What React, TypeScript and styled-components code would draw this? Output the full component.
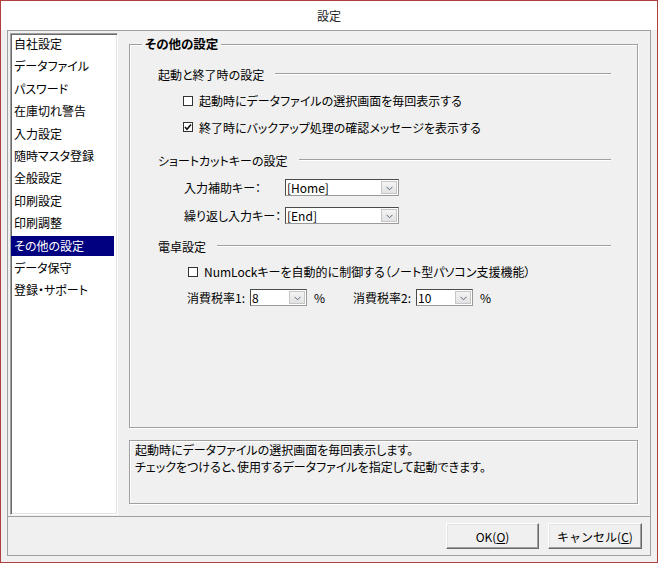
import React from "react";
import styled, { createGlobalStyle } from "styled-components";

const Global = createGlobalStyle`
  html, body { margin: 0; padding: 0; background: #ffffff; }
  body {
    font-family: "Noto Sans CJK JP", "Noto Sans", sans-serif;
    font-size: 12px;
    color: #000;
    font-feature-settings: "palt";
  }
  * { box-sizing: border-box; }
`;

const Window = styled.div`
  width: 658px;
  height: 563px;
  border: 1px solid #b0403e;
  background: #f0f0f0;
  display: flex;
  flex-direction: column;
`;

const TitleBar = styled.div`
  height: 29px;
  background: #ffffff;
  display: flex;
  align-items: center;
  justify-content: center;
  font-size: 12px;
  color: #222;
`;

const Body = styled.div`
  flex: 1;
  padding: 0 6px 6px 6px;
  display: flex;
`;

const Frame = styled.div`
  flex: 1;
  border: 1px solid #a0a0a0;
  display: flex;
  flex-direction: column;
`;

const TopArea = styled.div`
  height: 486px;
  display: flex;
  border-bottom: 1px solid #a0a0a0;
`;

const ListWrap = styled.div`
  padding: 2px 0 1px 2px;
  display: flex;
`;

const ListBox = styled.ul`
  width: 108px;
  margin: 0;
  padding: 0;
  list-style: none;
  background: #ffffff;
  border: 1px solid;
  border-color: #a0a0a0 #ffffff #ffffff #a0a0a0;
  box-shadow: inset 1px 1px 0 #696969, inset -1px -1px 0 #e3e3e3;
`;

const ListItem = styled.li<{ $selected?: boolean }>`
  height: 20px;
  line-height: 20px;
  width: calc(100% - 3px);
  margin-bottom: 2.4px;
  padding-left: 3px;
  white-space: nowrap;
  background: ${(p) => (p.$selected ? "#000080" : "transparent")};
  color: ${(p) => (p.$selected ? "#ffffff" : "#000")};
`;

const Content = styled.div`
  flex: 1;
  padding: 13px 12px 12px 11px;
  display: flex;
  flex-direction: column;
`;

const GroupBox = styled.div`
  height: 385px;
  margin-bottom: 12px;
  border: 1px solid #a0a0a0;
  box-shadow: inset 1px 1px 0 #ffffff, 1px 1px 0 #ffffff;
  display: flex;
  flex-direction: column;
`;

const GroupTitle = styled.div`
  align-self: flex-start;
  margin: -10px 0 0 12px;
  padding: 0 3px;
  line-height: 18px;
  background: #f0f0f0;
  font-weight: 700;
  font-size: 12.5px;
`;

const GroupBody = styled.div`
  padding: 11px 26px 0 28px;
  display: flex;
  flex-direction: column;
`;

const Section = styled.div<{ $gap: number; $mt: number }>`
  display: flex;
  flex-direction: column;
  gap: ${(p) => p.$gap}px;
  margin-top: ${(p) => p.$mt}px;
`;

const SubHeading = styled.div`
  height: 20px;
  display: flex;
  align-items: center;
  gap: 11px;
  white-space: nowrap;
`;

const Rule = styled.div`
  flex: 1;
  height: 2px;
  border-top: 1px solid #a0a0a0;
  border-bottom: 1px solid #ffffff;
`;

const CheckRow = styled.label<{ $indent: number }>`
  height: 20px;
  display: flex;
  align-items: center;
  gap: 6px;
  padding-left: ${(p) => p.$indent}px;
  white-space: nowrap;
`;

const Box = styled.span`
  width: 10px;
  height: 10px;
  flex: none;
  border: 1px solid #333;
  background: #ffffff;
  display: flex;
  align-items: center;
  justify-content: center;
`;

const SelectRow = styled.div`
  height: 20px;
  display: grid;
  grid-template-columns: 101px auto;
  align-items: center;
  padding-left: 26px;
  white-space: nowrap;
`;

const SelectBox = styled.div<{ $w: number }>`
  width: ${(p) => p.$w}px;
  height: 17px;
  display: flex;
  background: #ffffff;
  border: 1px solid;
  border-color: #4a4a4a #9a9a9a #9a9a9a #4a4a4a;
`;

const SelectValue = styled.div`
  flex: 1;
  padding-left: 1px;
  line-height: 15px;
  font-size: 12px;
  overflow: hidden;
`;

const DropButton = styled.div`
  width: 16px;
  margin: 1px;
  border: 1px solid #c6c6c6;
  background: linear-gradient(#f4f4f4, #e2e2e2);
  display: flex;
  align-items: center;
  justify-content: center;
  padding-top: 2px;
`;

const TaxRow = styled.div`
  height: 20px;
  display: flex;
  align-items: center;
  gap: 28px;
  padding-left: 29px;
  white-space: nowrap;
`;

const TaxGroup = styled.div`
  display: flex;
  align-items: center;
  gap: 5px;
`;

const Percent = styled.span`
  margin-left: 2px;
`;

const HelpBox = styled.div`
  height: 64px;
  border: 1px solid #a0a0a0;
  box-shadow: inset 1px 1px 0 #ffffff, 1px 1px 0 #ffffff;
  padding: 0 5px;
`;

const HelpLine = styled.div`
  line-height: 17px;
  white-space: nowrap;
`;

const ButtonBar = styled.div`
  flex: 1;
  display: flex;
  justify-content: flex-end;
  align-items: flex-start;
  gap: 9px;
  padding: 6px 8px 0 0;
`;

const Button = styled.button<{ $w: number }>`
  width: ${(p) => p.$w}px;
  height: 26px;
  font-family: inherit;
  font-size: 12px;
  color: #000;
  background: #f0f0f0;
  border: 1px solid;
  border-color: #ffffff #696969 #696969 #ffffff;
  box-shadow: inset -1px -1px 0 #a0a0a0, inset 1px 1px 0 #e3e3e3;
  padding: 0;
`;

const U = styled.span`
  text-decoration: underline;
`;

const Chevron = () => (
  <svg width="7" height="5" viewBox="0 0 7 5">
    <polyline points="0.5,0.8 3.5,3.8 6.5,0.8" fill="none" stroke="#56647a" strokeWidth="1" />
  </svg>
);

const CheckMark = () => (
  <svg width="8" height="8" viewBox="0 0 8 8">
    <polyline points="1,4 3,6.2 7,1.5" fill="none" stroke="#111" strokeWidth="1.6" />
  </svg>
);

const Select = ({ value, width }: { value: string; width: number }) => (
  <SelectBox $w={width}>
    <SelectValue>{value}</SelectValue>
    <DropButton>
      <Chevron />
    </DropButton>
  </SelectBox>
);

const Check = ({ checked, indent, children }: { checked?: boolean; indent: number; children: React.ReactNode }) => (
  <CheckRow $indent={indent}>
    <Box>{checked && <CheckMark />}</Box>
    <span>{children}</span>
  </CheckRow>
);

const items = [
  "自社設定",
  "データファイル",
  "パスワード",
  "在庫切れ警告",
  "入力設定",
  "随時マスタ登録",
  "全般設定",
  "印刷設定",
  "印刷調整",
  "その他の設定",
  "データ保守",
  "登録・サポート",
];

export default function App() {
  return (
    <>
      <Global />
      <Window>
        <TitleBar>設定</TitleBar>
        <Body>
          <Frame>
            <TopArea>
              <ListWrap>
                <ListBox>
                  {items.map((it) => (
                    <ListItem key={it} $selected={it === "その他の設定"}>
                      {it}
                    </ListItem>
                  ))}
                </ListBox>
              </ListWrap>
              <Content>
                <GroupBox>
                  <GroupTitle>その他の設定</GroupTitle>
                  <GroupBody>
                    <Section $gap={6.5} $mt={0}>
                      <SubHeading>
                        起動と終了時の設定
                        <Rule />
                      </SubHeading>
                      <Check indent={25}>起動時にデータファイルの選択画面を毎回表示する</Check>
                      <Check indent={25} checked>
                        終了時にバックアップ処理の確認メッセージを表示する
                      </Check>
                    </Section>
                    <Section $gap={7.5} $mt={13}>
                      <SubHeading>
                        ショートカットキーの設定
                        <Rule />
                      </SubHeading>
                      <SelectRow>
                        <span>入力補助キー：</span>
                        <Select value="[Home]" width={114} />
                      </SelectRow>
                      <SelectRow>
                        <span>繰り返し入力キー：</span>
                        <Select value="[End]" width={114} />
                      </SelectRow>
                    </Section>
                    <Section $gap={5.5} $mt={11}>
                      <SubHeading>
                        電卓設定
                        <Rule />
                      </SubHeading>
                      <Check indent={30}>NumLockキーを自動的に制御する（ノート型パソコン支援機能）</Check>
                      <TaxRow>
                        <TaxGroup>
                          <span>消費税率1:</span>
                          <Select value="8" width={57} />
                          <Percent>%</Percent>
                        </TaxGroup>
                        <TaxGroup>
                          <span>消費税率2:</span>
                          <Select value="10" width={57} />
                          <Percent>%</Percent>
                        </TaxGroup>
                      </TaxRow>
                    </Section>
                  </GroupBody>
                </GroupBox>
                <HelpBox>
                  <HelpLine>起動時にデータファイルの選択画面を毎回表示します。</HelpLine>
                  <HelpLine>チェックをつけると、使用するデータファイルを指定して起動できます。</HelpLine>
                </HelpBox>
              </Content>
            </TopArea>
            <ButtonBar>
              <Button $w={93}>
                OK(<U>O</U>)
              </Button>
              <Button $w={94}>
                キャンセル(<U>C</U>)
              </Button>
            </ButtonBar>
          </Frame>
        </Body>
      </Window>
    </>
  );
}
